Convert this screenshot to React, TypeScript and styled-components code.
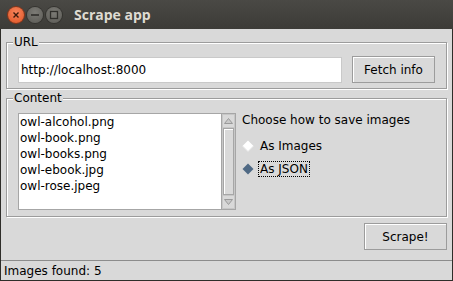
import React from "react";
import styled, { createGlobalStyle } from "styled-components";

const GlobalStyle = createGlobalStyle`
  html, body {
    margin: 0;
    padding: 0;
    background: #2e2d29;
  }
`;

const Window = styled.div`
  width: 453px;
  height: 281px;
  display: flex;
  flex-direction: column;
  font-family: "DejaVu Sans", sans-serif;
  font-size: 12px;
  color: #000;
  overflow: hidden;
`;

const TitleBar = styled.div`
  height: 29px;
  flex: none;
  display: flex;
  align-items: center;
  padding-left: 8px;
  background: linear-gradient(#4a4945, #3c3b37);
  box-sizing: border-box;
`;

const WinButton = styled.div<{ $close?: boolean }>`
  width: 16px;
  height: 16px;
  border-radius: 50%;
  margin-right: 3px;
  display: flex;
  align-items: center;
  justify-content: center;
  background: ${(p) =>
    p.$close
      ? "radial-gradient(circle at 50% 35%, #f6845c, #e25423)"
      : "radial-gradient(circle at 50% 35%, #7c7b76, #5a5954)"};
  box-shadow: 0 0 0 1px ${(p) => (p.$close ? "#8e3416" : "#34332f")};
`;

const Title = styled.span`
  margin-left: 9px;
  font-family: "Open Sans", sans-serif;
  font-weight: bold;
  font-size: 14px;
  color: #dfdbd2;
`;

const Body = styled.div`
  flex: 1;
  display: flex;
  flex-direction: column;
  background: #d9d9d9;
  border: 1px solid #2e2d29;
  border-top: none;
  padding: 6px 5px 0 5px;
  min-height: 0;
`;

const Group = styled.fieldset<{ $pad: string }>`
  margin: 0 0 2px 0;
  padding: ${(p) => p.$pad};
  border: 1px solid #9c9c9c;
  box-shadow: inset 1px 1px 0 #fff, 1px 1px 0 #fff;
  min-width: 0;
`;

const Caption = styled.legend`
  padding: 0 1px;
  margin-left: -5px;
  line-height: 14px;
  background: #d9d9d9;
`;

const UrlRow = styled.div`
  display: flex;
  align-items: center;
  gap: 10px;
`;

const Entry = styled.input`
  flex: 1;
  height: 26px;
  box-sizing: border-box;
  border: 1px solid #c9c9c9;
  background: #fff;
  font: inherit;
  font-size: 12px;
  padding: 0 2px;
  outline: none;
`;

const Button = styled.button<{ $w: number }>`
  width: ${(p) => p.$w}px;
  height: 27px;
  box-sizing: border-box;
  background: #d9d9d9;
  border: 1px solid #9c9c9c;
  box-shadow: inset 1px 1px 0 #fff;
  font: inherit;
  font-size: 12px;
  color: #000;
  padding: 0;
`;

const ContentRow = styled.div`
  display: flex;
  align-items: flex-start;
`;

const ListBox = styled.div`
  width: 203px;
  height: 97px;
  box-sizing: border-box;
  background: #fff;
  border: 1px solid #a6a6a6;
  border-right: none;
  padding-left: 1px;
`;

const ListItem = styled.div`
  line-height: 16px;
  height: 16px;
`;

const ScrollBar = styled.div`
  width: 15px;
  height: 97px;
  box-sizing: border-box;
  border: 1px solid #a6a6a6;
  background: #c7c7c7;
  display: flex;
  flex-direction: column;
  padding: 1px;
`;

const Arrow = styled.div`
  height: 12px;
  flex: none;
  display: flex;
  align-items: center;
  justify-content: center;
  background: #d9d9d9;
`;

const Slider = styled.div`
  flex: 1;
  background: #d9d9d9;
  border: 1px solid #a6a6a6;
  box-shadow: inset 1px 1px 0 #fff;
  margin: 1px 0;
`;

const Options = styled.div`
  margin-left: 6px;
  display: flex;
  flex-direction: column;
`;

const Prompt = styled.div`
  line-height: 14px;
  margin-bottom: 7px;
`;

const Radio = styled.label`
  display: flex;
  align-items: center;
  height: 23px;
  gap: 4px;
`;

const RadioText = styled.span<{ $focus?: boolean }>`
  line-height: 14px;
  padding: 0 1px;
  border: 1px dotted ${(p) => (p.$focus ? "#000" : "transparent")};
`;

const Footer = styled.div`
  display: flex;
  justify-content: flex-end;
  padding-top: 4px;
`;

const StatusBar = styled.div`
  margin: auto -5px 0 -5px;
  height: 20px;
  box-sizing: border-box;
  border-top: 1px solid #8c8c8c;
  padding: 3px 3px 0 3px;
  line-height: 15px;
`;

const Diamond = ({ on }: { on: boolean }) => (
  <svg width="12" height="12" viewBox="0 0 12 12">
    {on ? (
      <polygon points="6,0.5 11.5,6 6,11.5 0.5,6" fill="#4f6984" />
    ) : (
      <>
        <polygon points="6,0.5 11.5,6 6,11.5 0.5,6" fill="#fff" />
        <polyline points="11.5,6 6,11.5 0.5,6" fill="none" stroke="#e6e6e6" strokeWidth="1" />
      </>
    )}
  </svg>
);

const Triangle = ({ up }: { up: boolean }) => (
  <svg width="9" height="6" viewBox="0 0 9 6">
    <polygon
      points={up ? "4.5,0.5 8.5,5.5 0.5,5.5" : "0.5,0.5 8.5,0.5 4.5,5.5"}
      fill="#c9c9c9"
      stroke="#9a9a9a"
      strokeWidth="1"
    />
  </svg>
);

const files = [
  "owl-alcohol.png",
  "owl-book.png",
  "owl-books.png",
  "owl-ebook.jpg",
  "owl-rose.jpeg",
];

const App = (): JSX.Element => {
  return (
    <Window>
      <GlobalStyle />
      <TitleBar>
        <WinButton $close>
          <svg width="8" height="8" viewBox="0 0 8 8">
            <path d="M1.5 1.5 L6.5 6.5 M6.5 1.5 L1.5 6.5" stroke="#3b1a0c" strokeWidth="1.4" />
          </svg>
        </WinButton>
        <WinButton>
          <svg width="10" height="10" viewBox="0 0 10 10">
            <path d="M1 5 H9" stroke="#2f2e2b" strokeWidth="1.6" />
          </svg>
        </WinButton>
        <WinButton>
          <svg width="10" height="10" viewBox="0 0 10 10">
            <rect x="1.5" y="1.5" width="7" height="7" fill="none" stroke="#2f2e2b" strokeWidth="1.3" />
          </svg>
        </WinButton>
        <Title>Scrape app</Title>
      </TitleBar>
      <Body>
        <Group $pad="7px 11px 5px 11px">
          <Caption>URL</Caption>
          <UrlRow>
            <Entry defaultValue="http://localhost:8000" />
            <Button $w={83}>Fetch info</Button>
          </UrlRow>
        </Group>
        <Group $pad="8px 11px 6px 11px">
          <Caption>Content</Caption>
          <ContentRow>
            <ListBox>
              {files.map((f) => (
                <ListItem key={f}>{f}</ListItem>
              ))}
            </ListBox>
            <ScrollBar>
              <Arrow>
                <Triangle up />
              </Arrow>
              <Slider />
              <Arrow>
                <Triangle up={false} />
              </Arrow>
            </ScrollBar>
            <Options>
              <Prompt>Choose how to save images</Prompt>
              <Radio>
                <Diamond on={false} />
                <RadioText>As Images</RadioText>
              </Radio>
              <Radio>
                <Diamond on />
                <RadioText $focus>As JSON</RadioText>
              </Radio>
            </Options>
          </ContentRow>
        </Group>
        <Footer>
          <Button $w={83}>Scrape!</Button>
        </Footer>
        <StatusBar>Images found: 5</StatusBar>
      </Body>
    </Window>
  );
};

export default App;
